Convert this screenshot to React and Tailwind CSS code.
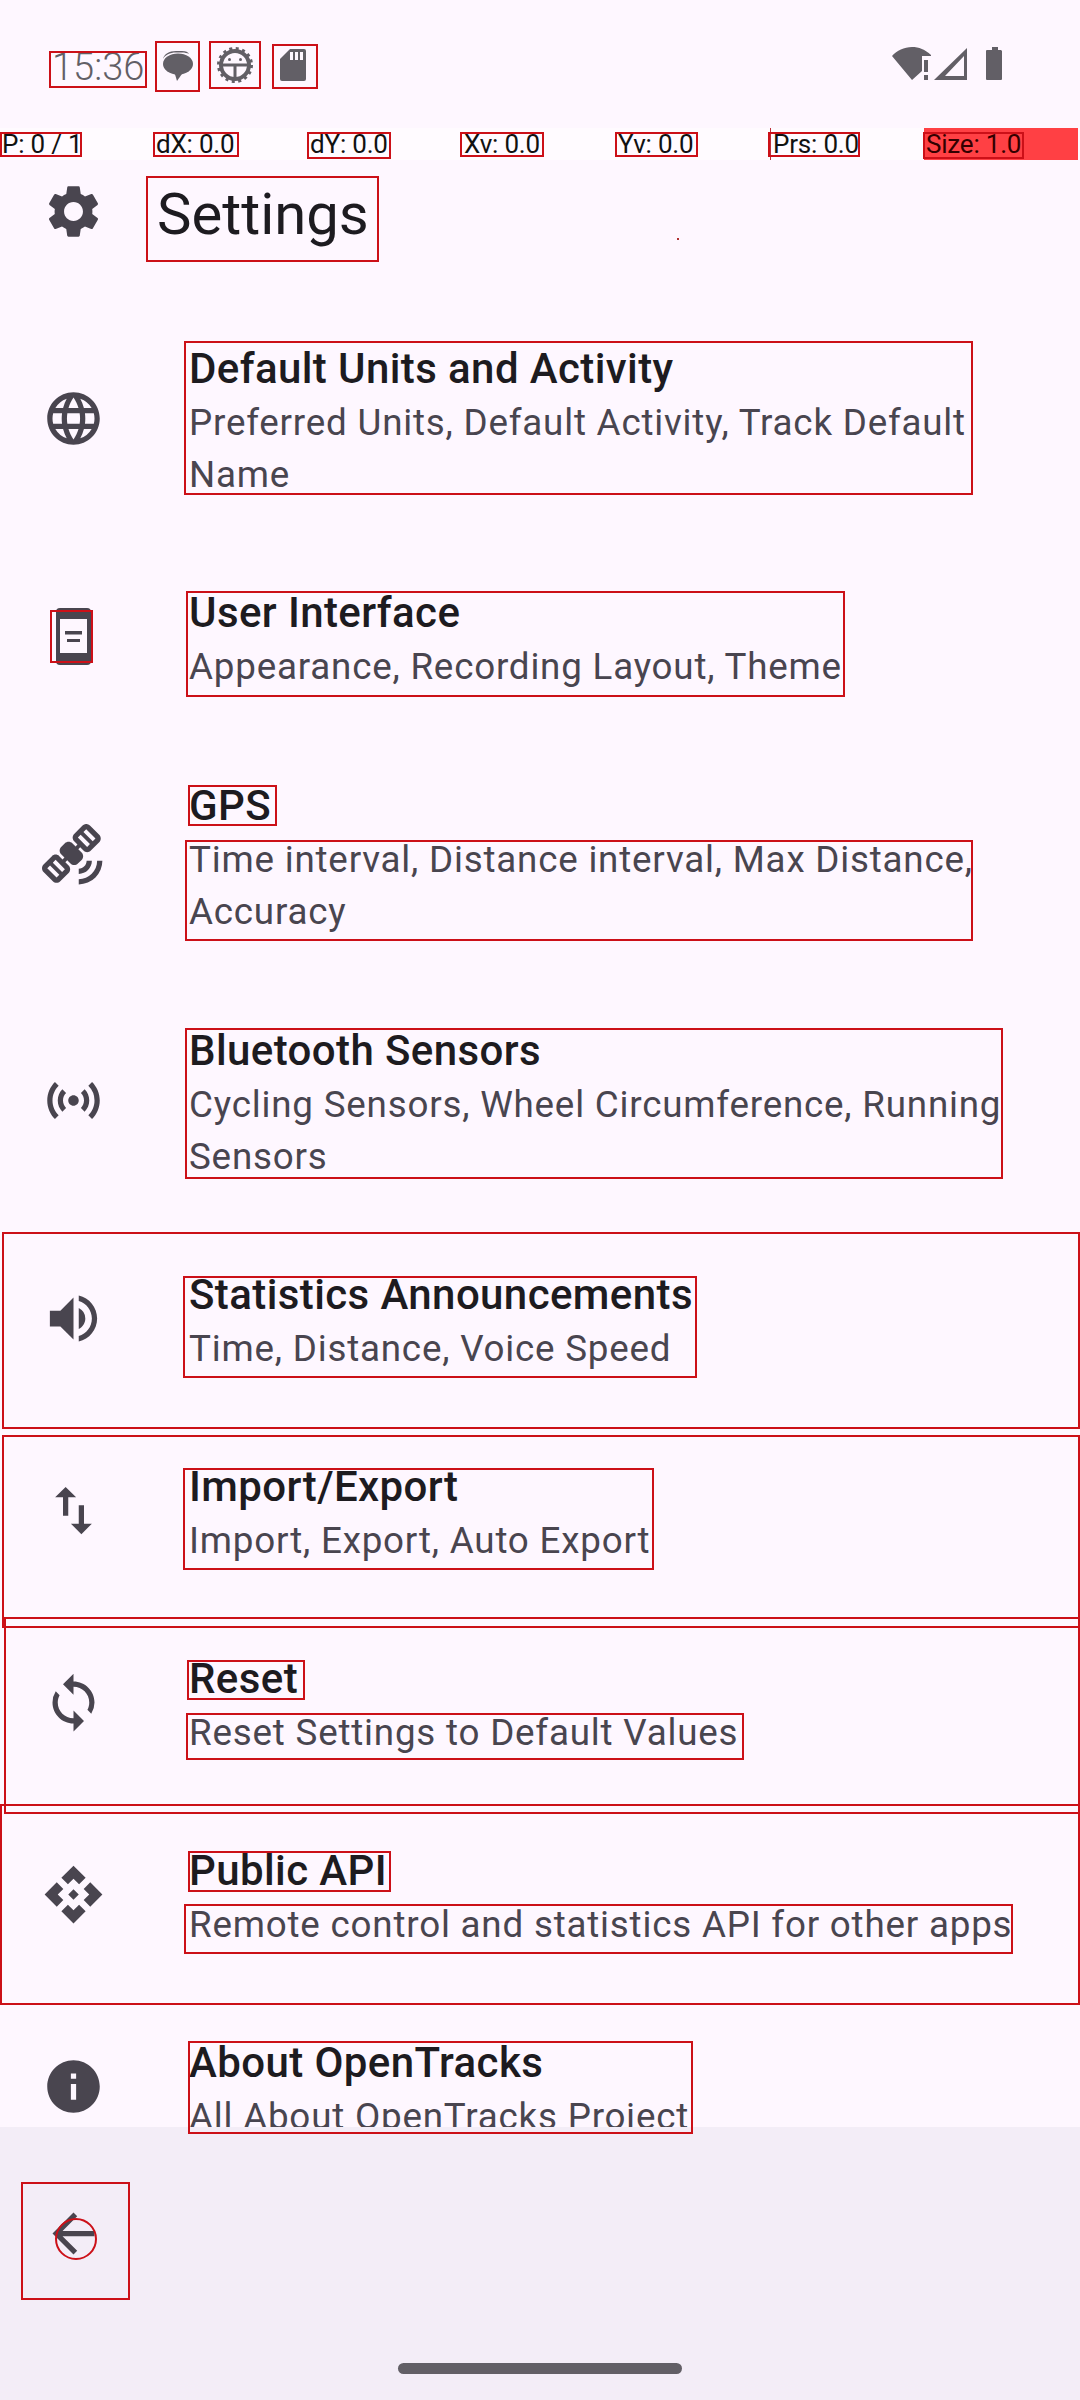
import { MdSettings, MdLanguage, MdSatelliteAlt, MdSensors, MdVolumeUp, MdImportExport, MdSync, MdApi, MdInfo, MdArrowBack } from "react-icons/md";

const PhoneIcon = () => (
  <svg width="63" height="63" viewBox="0 0 63 63" fill="none">
    <rect x="14" y="3" width="35" height="57" rx="4" fill="#49454f" />
    <rect x="18" y="14" width="27" height="34" fill="#fef7ff" />
    <rect x="23" y="26" width="17" height="3.5" fill="#49454f" />
    <rect x="25" y="34" width="13" height="3" fill="#49454f" />
  </svg>
);

const rows = [
  { icon: <MdLanguage size={63} />, title: "Default Units and Activity", sub: "Preferred Units, Default Activity, Track Default Name", h: "h-[245px]" },
  { icon: <PhoneIcon />, title: "User Interface", sub: "Appearance, Recording Layout, Theme", h: "h-[192px]" },
  { icon: <MdSatelliteAlt size={63} />, title: "GPS", sub: "Time interval, Distance interval, Max Distance, Accuracy", h: "h-[245px]" },
  { icon: <MdSensors size={63} />, title: "Bluetooth Sensors", sub: "Cycling Sensors, Wheel Circumference, Running Sensors", h: "h-[245px]" },
  { icon: <MdVolumeUp size={63} />, title: "Statistics Announcements", sub: "Time, Distance, Voice Speed", h: "h-[192px]" },
  { icon: <MdImportExport size={63} />, title: "Import/Export", sub: "Import, Export, Auto Export", h: "h-[192px]" },
  { icon: <MdSync size={63} />, title: "Reset", sub: "Reset Settings to Default Values", h: "h-[192px]" },
  { icon: <MdApi size={63} />, title: "Public API", sub: "Remote control and statistics API for other apps", h: "h-[192px]" },
  { icon: <MdInfo size={63} />, title: "About OpenTracks", sub: "All About OpenTracks Project", h: "h-[192px]" },
];

const pointerCells = ["P: 0 / 1", "dX: 0.0", "dY: 0.0", "Xv: 0.0", "Yv: 0.0", "Prs: 0.0"];

// red debug rectangles that sit on top of the screen
const boxes = [
  "left-[49px] top-[51px] w-[98px] h-[37px]",
  "left-[155px] top-[41px] w-[45px] h-[51px]",
  "left-[209px] top-[41px] w-[52px] h-[48px]",
  "left-[272px] top-[44px] w-[46px] h-[45px]",
  "left-[0px] top-[132px] w-[82px] h-[25px]",
  "left-[153px] top-[132px] w-[86px] h-[25px]",
  "left-[307px] top-[132px] w-[84px] h-[27px]",
  "left-[460px] top-[132px] w-[84px] h-[25px]",
  "left-[615px] top-[132px] w-[83px] h-[25px]",
  "left-[768px] top-[132px] w-[92px] h-[25px]",
  "left-[923px] top-[132px] w-[101px] h-[27px]",
  "left-[146px] top-[176px] w-[233px] h-[86px]",
  "left-[184px] top-[341px] w-[789px] h-[154px]",
  "left-[186px] top-[591px] w-[659px] h-[106px]",
  "left-[50px] top-[610px] w-[43px] h-[53px]",
  "left-[188px] top-[785px] w-[89px] h-[41px]",
  "left-[185px] top-[840px] w-[788px] h-[101px]",
  "left-[185px] top-[1028px] w-[818px] h-[151px]",
  "left-[2px] top-[1232px] w-[1078px] h-[197px]",
  "left-[183px] top-[1276px] w-[514px] h-[102px]",
  "left-[2px] top-[1435px] w-[1078px] h-[193px]",
  "left-[183px] top-[1468px] w-[471px] h-[102px]",
  "left-[4px] top-[1617px] w-[1076px] h-[197px]",
  "left-[187px] top-[1660px] w-[118px] h-[40px]",
  "left-[186px] top-[1713px] w-[558px] h-[47px]",
  "left-[0px] top-[1804px] w-[1080px] h-[201px]",
  "left-[188px] top-[1851px] w-[203px] h-[41px]",
  "left-[184px] top-[1904px] w-[829px] h-[50px]",
  "left-[188px] top-[2041px] w-[505px] h-[93px]",
  "left-[21px] top-[2182px] w-[109px] h-[118px]",
];

const App = () => {
  return (
    <div className="relative w-[1080px] h-[2400px] overflow-hidden flex flex-col bg-[#fef7ff] font-['Roboto',sans-serif]">
      {/* status bar */}
      <div className="h-[128px] flex items-start pl-[52px] pr-[74px] text-[#625f66]">
        <span className="w-[92px] mt-[45px] text-[38px] leading-[44px] font-light">15:36</span>
        <svg className="ml-[18px] mt-[51px]" width="31" height="30" viewBox="0 0 31 30" fill="#625f66">
          <path d="M1 8C2 3 7 0 14 0h6c4 0 6 1 7 3-2-1-4-1.5-7-1.5h-6C8 1.500 3 4 1 8z" />
          <ellipse cx="16" cy="13" rx="15" ry="10.500" />
          <path d="M12 20h10l-7 10z" />
        </svg>
        <svg className="ml-[24px] mt-[47px]" width="36" height="36" viewBox="0 0 36 36" fill="none" stroke="#625f66">
          <circle cx="18" cy="18" r="14" strokeWidth="4" />
          <circle cx="18" cy="18" r="16.500" strokeWidth="3" strokeDasharray="3 3.500" />
          <path d="M5 18h26M18 18v13" strokeWidth="3" />
          <circle cx="12.500" cy="12.500" r="1.500" fill="#625f66" stroke="none" />
          <circle cx="23.500" cy="12.500" r="1.500" fill="#625f66" stroke="none" />
        </svg>
        <svg className="ml-[27px] mt-[49px]" width="26" height="32" viewBox="0 0 26 32" fill="#625f66">
          <path d="M10 0h14a2 2 0 0 1 2 2v28a2 2 0 0 1-2 2H2a2 2 0 0 1-2-2V10z" />
          <rect x="10" y="3" width="3" height="8" fill="#fef7ff" />
          <rect x="15" y="3" width="3" height="8" fill="#fef7ff" />
          <rect x="20" y="3" width="3" height="8" fill="#fef7ff" />
        </svg>
        <svg className="ml-auto mt-[47px]" width="114" height="33" viewBox="0 0 114 33" fill="#625f66">
          <path d="M0 9C5 3.500 12 0 20 0c7 0 13 2.500 19 8v1h-9v15l-10 9z" />
          <rect x="32" y="13" width="4" height="12" />
          <rect x="32" y="28" width="4" height="5" />
          <path fillRule="evenodd" d="M75 1v32H42zM72 9 53 29h19z" />
          <path d="M100 3V0h6v3h3a5 5 0 0 1 1 1v28a1 1 0 0 1-1 1H95a1 1 0 0 1-1-1V4a1 1 0 0 1 1-1z" />
        </svg>
      </div>

      {/* pointer location bar */}
      <div className="h-[32px] grid grid-cols-[repeat(7,154px)] bg-white/50 text-[26px] leading-[32px] tracking-[-0.2px] text-[#111]">
        {pointerCells.map((c) => (
          <div key={c} className={c.startsWith("Prs") ? "pl-[2px] border-l border-[#c0303a]" : "pl-[2px]"}>{c}</div>
        ))}
        <div className="pl-[2px] bg-[#ff4044] text-[#300]">Size: 1.0</div>
      </div>

      {/* toolbar */}
      <div className="h-[143px] flex items-start text-[#49454f]">
        <div className="ml-[42px] mt-[20px] w-[63px]"><MdSettings size={63} /></div>
        <h1 className="relative ml-[52px] mt-[16px] text-[58px] leading-[76px] text-[#1d1b20]">
          Settings
        </h1>
        <div className="ml-[308px] mt-[78px] w-[2px] h-[2px] bg-[#b03030]" />
      </div>

      {/* list */}
      <div className="flex-1 overflow-hidden">
        {rows.map((r) => (
          <div key={r.title} className={`${r.h} flex items-center pb-[13px] pl-[42px] pr-[42px] text-[#49454f]`}>
            <div className="w-[63px] shrink-0 -mt-[2px]">{r.icon}</div>
            <div className="ml-[84px] flex-1 mt-[3px]">
              <div className="text-[42px] leading-[57px] font-medium tracking-[0.4px] text-[#1d1b20]">{r.title}</div>
              <div className="text-[36.750px] leading-[52.500px] tracking-[0.8px]">{r.sub}</div>
            </div>
          </div>
        ))}
      </div>

      {/* bottom bar */}
      <div className="h-[273px] shrink-0 bg-[#f3edf7] flex flex-col">
        <div className="ml-[42px] mt-[75px] w-[63px] text-[#49454f]"><MdArrowBack size={63} /></div>
        <div className="mt-auto mb-[26px] mx-auto w-[284px] h-[11px] rounded-full bg-[#625f66]" />
      </div>

      {/* overlay */}
      <div className="absolute inset-0 pointer-events-none">
        {boxes.map((b) => (
          <div key={b} className={`absolute ${b} border-2 border-[#cc1018]`} />
        ))}
        <div className="absolute left-[55px] top-[2218px] w-[42px] h-[42px] rounded-full border-2 border-[#cc1018]" />
      </div>
    </div>
  );
};

export default App;
